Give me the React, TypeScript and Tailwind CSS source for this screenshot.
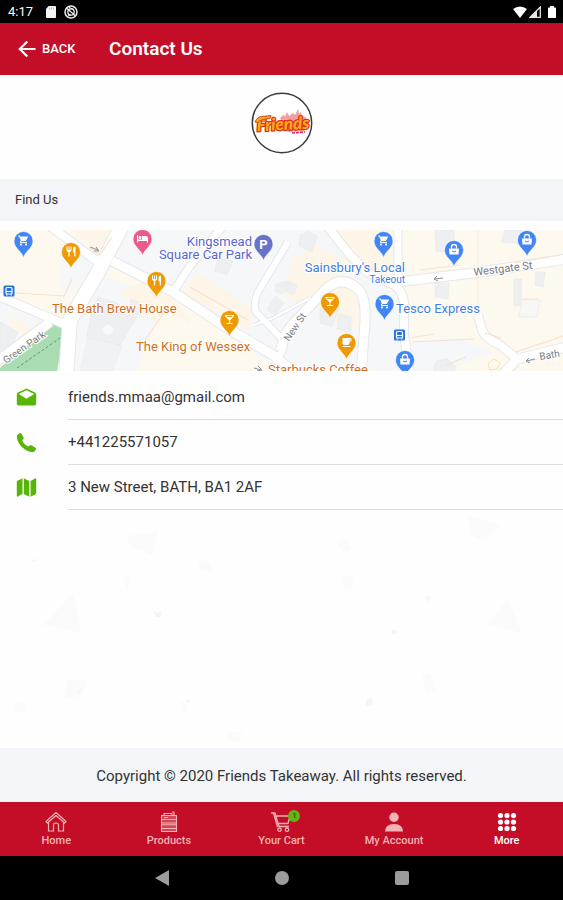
import type { ReactNode } from "react";
import { MdHotel, MdLocalBar, MdLocalCafe, MdRestaurant, MdShoppingCart } from "react-icons/md";
import type { IconType } from "react-icons";

const MailIcon = () => (
  <svg className="h-[21px] w-[21px]" viewBox="0 0 21 21">
    <path d="M.800 7.500Q.800 6.200 2 5.500L10.500 1.500 19 5.500q1.200.7 1.200 2v9.200q0 1.800-1.800 1.800H2.600Q.8 18.500.8 16.700z" fill="currentColor" />
    <path d="M2.800 7l7.700-3.700L18.200 7l-7.700 4.800z" fill="white" />
  </svg>
);

const PhoneIcon = () => (
  <svg className="h-[21px] w-[21px]" viewBox="0 0 21 21" fill="currentColor">
    <path d="M1 3.500Q2.500.800 4.500 1q1 .2 3 4.200.6 1.300-.3 2.200L6.300 8.500q1.200 3.600 5.800 6l1.500-1q1-.8 2.100-.1 4 2.100 4.300 3.100.2 1.300-1.600 2.900-1.300 1-3.600.7Q9.500 19 5.200 14.300.2 8.500 1 3.500z" />
  </svg>
);

const FoldedMapIcon = () => (
  <svg className="h-[21px] w-[21px]" viewBox="0 0 21 21" fill="currentColor">
    <path d="M6.500 1.200v15.600L2 19.500q-1.200.5-1.200-.8V5q0-.8.700-1.200z" />
    <path d="M7.800 1.200l5.500 2.800v15.700l-5.500-2.800z" />
    <path d="M14.600 4L19 1.400q1.200-.5 1.200.8V16q0 .8-.7 1.200l-4.900 2.600z" />
  </svg>
);

const contacts = [
  { icon: <MailIcon />, text: "friends.mmaa@gmail.com", href: "mailto:friends.mmaa@gmail.com" },
  { icon: <PhoneIcon />, text: "+441225571057", href: "tel:+441225571057" },
  { icon: <FoldedMapIcon />, text: "3 New Street, BATH, BA1 2AF", href: "#map" },
];

const StatusBar = () => (
  <div className="flex h-[23px] items-center justify-between bg-black pl-2 pr-1.5 text-white">
    <div className="flex items-center">
      <span className="w-9 text-[13px] leading-5">4:17</span>
      <svg className="h-3 w-4" viewBox="0 0 16 12">
        <path d="M4.500 0H11a1 1 0 0 1 1 1v10a1 1 0 0 1-1 1H3a1 1 0 0 1-1-1V3z" fill="#f4f4f4" />
        <path d="M5.500 1.500v2M7.500 1.500v2M9.500 1.500v2" stroke="#bbb" />
      </svg>
      <svg className="ml-1 h-3.5 w-3.5" viewBox="0 0 14 14" fill="none" stroke="#eee">
        <circle cx="7" cy="7" r="6" strokeWidth="1.5" />
        <circle cx="7" cy="7" r="3.2" strokeWidth="1.3" />
        <path d="M2.5 3l9 8M5 2.5l5 2M4 11l3-1" strokeWidth="1.3" />
      </svg>
    </div>
    <div className="flex items-center gap-0.5">
      <svg className="h-3 w-3.5" viewBox="0 0 14 12" fill="white">
        <path d="M0 3q7-5 14 0L7 12z" />
      </svg>
      <svg className="h-3 w-3" viewBox="0 0 12 12" fill="none" stroke="#e6e6e6">
        <path d="M11.3 1v10.3H1z" strokeWidth="1.3" />
        <path d="M7.5 5v6H1.5z" fill="#e6e6e6" />
      </svg>
      <svg className="ml-1 h-3.5 w-2.5" viewBox="0 0 10 14" fill="white">
        <path d="M3 1h4v1.5h1.2q.8 0 .8.8v9q0 .7-.8.7H1.8q-.8 0-.8-.7v-9q0-.8.8-.8H3z" />
      </svg>
    </div>
  </div>
);

const Logo = () => (
  <svg className="h-[62px] w-[62px]" viewBox="0 0 62 62" role="img" aria-label="Friends">
    <circle cx="31" cy="31" r="29.7" fill="white" stroke="#3c3c3c" strokeWidth="1.5" />
    <path d="M29 26l3-3 2 1 2-4 2 4 4-3 2 2 3-6 1 5 2-2 1 4 4 1-2 14-16 1z" fill="#e3423a" opacity=".5" />
    <text
      x="32"
      y="38"
      textAnchor="middle"
      transform="rotate(-3 31 32)"
      className="font-['Lato'] text-[17px] font-black italic"
      fill="#fbab18"
      stroke="#e02d20"
      strokeWidth="2.4"
      strokeLinejoin="round"
      paintOrder="stroke"
    >
      Friends
    </text>
    <path d="M4 30q2-5 7-5.500l9-1-1 3-7 1q-4 1-5 3z" fill="#fbab18" stroke="#e02d20" strokeWidth=".9" />
    <path d="M41 41l13-1" stroke="#dc2860" strokeWidth="1.600" strokeDasharray="3 1" />
  </svg>
);

type PinProps = { x: number; y: number; color: string; icon?: IconType; children?: ReactNode };

// x, y is the centre of the round head
const Pin = ({ x, y, color, icon: Icon, children }: PinProps) => (
  <g transform={`translate(${x} ${y})`}>
    <path d="M0 17C-.8 11-9.500 7.500-9.500 0a9.500 9.500 0 0 1 19 0C9.500 7.500.8 11 0 17z" fill={color} stroke="white" strokeWidth=".6" />
    {Icon && <Icon x={-6} y={-6.500} size={12} color="white" />}
    {children}
  </g>
);

const ShopPin = ({ x, y }: { x: number; y: number }) => (
  <Pin x={x} y={y} color="#4285f4">
    <path d="M-5-1.500H5L4.500 4.500h-9z" fill="white" />
    <path d="M-2.500-1.500v-1.500a2.500 2.500 0 0 1 5 0v1.500" fill="none" stroke="white" strokeWidth="1.300" />
    <path d="M-2 1q2 2 4 0" fill="none" stroke="#4285f4" />
  </Pin>
);

const Stop = ({ x, y }: { x: number; y: number }) => (
  <g transform={`translate(${x} ${y})`}>
    <rect x="-5.500" y="-5.500" width="11" height="11" rx="1.500" fill="#2673e0" />
    <rect x="-3" y="-3.500" width="6" height="6.500" rx="1" fill="none" stroke="white" strokeWidth="1.200" />
    <path d="M-3 .5h6M-3 4h1.500M1.500 4H3" stroke="white" strokeWidth="1.200" />
  </g>
);

const roads = [
  { d: "M122-4L98 42 70 90 66 145", w: 14 },
  { d: "M50-4L98 32", w: 8 },
  { d: "M112 31L173 62 227 98 273 125 296 144", w: 9 },
  { d: "M173 62L190 36 223-4", w: 7 },
  { d: "M-4 65L50 88 66 95", w: 8 },
  { d: "M-4 132L50 92", w: 9 },
  { d: "M288 12L258 62Q253 72 256 82L283 110Q286 118 277 128", w: 6 },
  { d: "M281 120Q283 105 292 95L327 58Q342 45 358 59Q366 66 365 92L361 145", w: 9 },
  { d: "M327-4L350 25 367 42 388 52", w: 8 },
  { d: "M398-4V52", w: 7 },
  { d: "M385 52L406 51 473 43 567 29", w: 9 },
  { d: "M388 52Q404 58 404 75V105L410 145", w: 8 },
  { d: "M478 85L482 100Q485 108 500 115L517 129", w: 8 },
  { d: "M502 145L517 129 567 117", w: 9 },
  { d: "M254 95L273 88 310 68", w: 2 },
];

const MapView = () => (
  <svg
    id="map"
    className="block h-[141px] w-full font-['Roboto','Liberation_Sans',sans-serif]"
    viewBox="0 0 563 141"
    preserveAspectRatio="xMidYMid slice"
    role="img"
    aria-label="Map of New Street, Bath"
  >
    <rect width="563" height="141" fill="#fef9ef" />
    <g fill="#f6f7f9">
      <path d="M124 0h200l40 42 24 12 18 20 4 67H277L174 66 117 33z" />
      <path d="M98 45L170 68 135 141H72L75 95z" />
      <path d="M0 68L50 88 50 92 0 130z" />
      <path d="M62 8L95 28 88 44 68 68 60 50z" />
      <path d="M404 112l50-5 40 15-50 19h-36z" />
    </g>
    <g fill="#fdf5e8">
      <path d="M118 62l24-10 32 18 16 20-24 51h-22l18-42z" />
      <path d="M181 62l16-20 58 38-5 20z" />
      <path d="M292 30l22-16 40 22-48 42-22-12z" />
      <path d="M317 76l10-18 20-3 12 12v32l-30-8z" />
      <path d="M322 0h72v46l-24-8z" />
      <path d="M160 79L285 141H140z" fill="#fef9ef" />
      <path d="M72 0h44l-18 22z" />
      <path d="M10 86l14 6 10 16-26-8z" />
    </g>
    <g fill="#eeeff1" stroke="#e5e7ea" strokeWidth=".6">
      <path d="M98 67l19 6 10 8 8 8-15 26-33-8 3-18z" />
      <path d="M131 69l12 5-8 15-6-4z" />
      <path d="M88 108l34 8-10 25H80z" opacity=".6" />
      <path d="M300 5l8-4 9 5-5 16-13-6z" />
      <path d="M275 55l10-4 6 4-9 9-7-3zM287 51l10 4-3 9-8-2z" />
      <path d="M275 66l9 7-9 12-8-5z" />
      <path d="M320 78l10-4 9 5-7 17-12-3zM339 84l12 3v16l-14-4z" />
      <path d="M218 28l15 3-6 14-12-4z" />
      <path d="M505 0h17l-3 13-17-1zM435 0h19v20l-18 2zM514 49h8l-1 26-7 1zM536 42h9l-2 15-8-2zM435 53h14l-1 16-13-2z" />
      <path d="M436 131l12-2 8 8-4 8h-20zM0 92l18 10-9 18-9 4z" />
    </g>
    <path d="M522 70h18l-3 17h-18z" fill="#f7f7f8" stroke="#e8e8e8" strokeWidth=".6" />
    <circle cx="108" cy="100" r="5" fill="#f9f9f9" />
    <path d="M50 94l15 2-8 45H0v-3z" fill="#a9dcb3" />
    <path d="M17 138l43-30" stroke="#5c9b6d" strokeWidth="1" strokeDasharray="3 2" />
    <g fill="none" stroke="#e6e7ea" strokeLinejoin="round">
      {roads.map(({ d, w }) => (
        <path key={d} d={d} strokeWidth={w + 2} />
      ))}
    </g>
    <g fill="none" stroke="white" strokeLinejoin="round">
      {roads.map(({ d, w }) => (
        <path key={d} d={d} strokeWidth={w} />
      ))}
    </g>
    <g fill="none" stroke="#f8e0ce">
      <path d="M16 63l48 3 8-17M90 18l10 7 12-18M140 117l28-40M190 57l58 33M420 40l40-5M515 33l45-8M522 69h16M410 108l24-4M412 112l62-3M485 103l16 5M516 122l47-16M446 135l20-8" strokeWidth="1.200" />
      <path d="M478 0v82" strokeWidth=".6" />
      <path d="M488 134l6-5 6 4-3 6-7 1z" stroke="#f7e3a8" fill="#fffaf0" />
    </g>

    <Pin x={23.500} y={11} color="#4285f4" icon={MdShoppingCart} />
    <Pin x={71} y={22} color="#ee9a05" icon={MdRestaurant} />
    <Pin x={142.500} y={9} color="#ea5a8d" icon={MdHotel} />
    <Pin x={156.500} y={51} color="#ee9a05" icon={MdRestaurant} />
    <Pin x={229.500} y={90} color="#ee9a05" icon={MdLocalBar} />
    <Pin x={263.500} y={14} color="#6673c9">
      <text y="5" textAnchor="middle" fill="white" className="text-[13px] font-bold">
        P
      </text>
    </Pin>
    <Pin x={330} y={72} color="#ee9a05" icon={MdLocalBar} />
    <Pin x={346.500} y={113} color="#ee9a05" icon={MdLocalCafe} />
    <Pin x={383.500} y={11} color="#4285f4" icon={MdShoppingCart} />
    <ShopPin x={454} y={20} />
    <ShopPin x={527} y={10} />
    <Pin x={384.500} y={74} color="#4285f4" icon={MdShoppingCart} />
    <ShopPin x={405} y={130} />
    <Stop x={9} y={61} />
    <Stop x={399.500} y={105} />

    <g className="text-[13px]" stroke="white" strokeWidth="2" strokeLinejoin="round" paintOrder="stroke">
      <g fill="#5b67cf">
        <text x="252" y="16" textAnchor="end">Kingsmead</text>
        <text x="252" y="29" textAnchor="end">Square Car Park</text>
      </g>
      <g fill="#3f7fe0">
        <text x="405" y="42" textAnchor="end">Sainsbury's Local</text>
        <text x="405" y="53" textAnchor="end" className="text-[10px]">Takeout</text>
        <text x="396" y="83">Tesco Express</text>
      </g>
      <g fill="#cf7025">
        <text x="52" y="83">The Bath Brew House</text>
        <text x="136" y="121">The King of Wessex</text>
        <text x="268" y="144">Starbucks Coffee</text>
      </g>
    </g>
    <g fill="#777b80" className="text-[10px]" stroke="white" strokeWidth="2" paintOrder="stroke">
      <text transform="translate(6 134) rotate(-35)">Green Park</text>
      <text transform="translate(289 112) rotate(-56)">New St</text>
      <text transform="translate(474 46) rotate(-7)" className="text-[11px]">Westgate St</text>
      <text transform="translate(540 130) rotate(-10)">Bath</text>
    </g>
    <g fill="none" stroke="#8b8f94">
      <path d="M443 48l-9 1M437 46l-3 3 4 2M535 129l-9 2M529 128l-3 3 4 2M90 17l8 3M96 17l3 4-5 0M254 138l7 2M258 136l4 4-5 1" />
    </g>
  </svg>
);

// faint crumbs scattered over the page background
const Crumbs = () => (
  <svg className="pointer-events-none absolute inset-0 -z-10 h-full w-full" viewBox="0 0 563 238" preserveAspectRatio="xMidYMid slice" aria-hidden="true">
    <g fill="#fbfbfb">
      <path d="M74 83l7 40-38-8zM126 26l32-4-6 23-20-8zM468 5l32 10-16 16-14-6zM508 88l14 36-34-10z" />
      <path d="M340 68l12-3 2 10-8 6zM200 50l10 2 2 10-14-4zM68 170l20 1-10 20-14-4zM422 165l8-2 6 18-10 2z" />
      <path d="M14 192l12 2 2 6-14 4zM124 66l8 2-6 14zM336 32l8-4 8 10-8 6zM180 190l8 6-4 12zM230 222h12l-2 10-14-2z" />
    </g>
    <g fill="#f5f5f5">
      <path d="M153 100l4 3 5-2-2 6h-4zM366 190l6-3v8l-6 1zM392 120h4v4h-5zM425 88l5-4-1 8zM32 50l6-1-4 3zM186 190l5-1-3 4zM78 181l4-1-3 4z" />
    </g>
  </svg>
);

const BackArrow = () => (
  <svg className="h-[22px] w-[22px]" viewBox="0 0 22 22" fill="none" stroke="currentColor" strokeWidth="2.200">
    <path d="M19.500 11H4M11.300 3.500L3.800 11l7.500 7.500" />
  </svg>
);

const HomeIcon = () => (
  <svg className="h-[22px] w-[22px]" viewBox="0 0 22 22" fill="none" stroke="currentColor" strokeWidth="1.200" strokeLinejoin="round">
    <path d="M1 10.500L11 1.500l10 9-1.400 1.500L11 4.500 2.400 12z" />
    <path d="M3.500 11.500V20h5v-6q0-2 2.500-2t2.500 2v6h5v-8.500" />
  </svg>
);

const ProductsIcon = () => (
  <svg className="h-[22px] w-[22px]" viewBox="0 0 22 22" fill="none" stroke="currentColor" strokeWidth="1.100">
    <path d="M3.500 4.500h15v16h-15z" fill="currentColor" fillOpacity=".35" />
    <path d="M6 4.500V2.500h8v2M14 1h2v3.500M4 8.500h14M4 12h14M4 13.700h14M4 17.500h14M6 6.500h4" />
  </svg>
);

const CartIcon = () => (
  <svg className="h-[22px] w-[22px]" viewBox="0 0 22 22" fill="none" stroke="currentColor" strokeWidth="1.300" strokeLinejoin="round">
    <path d="M1 2h4l4 13.500h10M5.800 5H20l-2 7.500H8M3.500 2l4 14" />
    <circle cx="9.500" cy="18.700" r="1.700" />
    <circle cx="17" cy="18.700" r="1.700" />
  </svg>
);

const AccountIcon = () => (
  <svg className="h-[22px] w-[22px]" viewBox="0 0 22 22" fill="currentColor">
    <circle cx="11" cy="6.200" r="4.700" />
    <path d="M2 20.500q0-7.500 9-7.500t9 7.500z" />
  </svg>
);

const MoreIcon = () => (
  <svg className="h-[22px] w-[22px]" viewBox="0 0 22 22" fill="currentColor">
    {[4.500, 11, 17.500].map((y) => [4.500, 11, 17.500].map((x) => <circle key={`${x}-${y}`} cx={x} cy={y} r="2.600" />))}
  </svg>
);

const tabs = [
  { label: "Home", icon: <HomeIcon /> },
  { label: "Products", icon: <ProductsIcon /> },
  { label: "Your Cart", icon: <CartIcon />, badge: 1 },
  { label: "My Account", icon: <AccountIcon /> },
  { label: "More", icon: <MoreIcon />, active: true },
];

const TabBar = () => (
  <nav className="grid h-[54px] grid-cols-5 bg-[#c40d26]">
    {tabs.map(({ label, icon, badge, active }) => (
      <a
        key={label}
        href="#"
        aria-current={active ? "page" : undefined}
        className={`flex flex-col items-center pt-[9px] text-[11px] leading-4 font-medium ${active ? "text-white" : "text-[#f3b3b5]"}`}
      >
        <span className="relative">
          {icon}
          {badge && (
            <span className="absolute -right-2 -top-px h-3 w-3 rounded-full bg-[#62b510] text-center text-[8px] leading-3 text-[#234a00]">
              {badge}
            </span>
          )}
        </span>
        {label}
      </a>
    ))}
  </nav>
);

const SystemNav = () => (
  <div className="flex h-11 items-center justify-center gap-[106px] bg-black">
    <button type="button" aria-label="Back">
      <svg className="h-4 w-3.5" viewBox="0 0 14 16" fill="#9c9c9c">
        <path d="M14 0v16L0 8z" />
      </svg>
    </button>
    <button type="button" aria-label="Home" className="h-3.5 w-3.5 rounded-full bg-[#9c9c9c]" />
    <button type="button" aria-label="Recent apps" className="h-3.5 w-3.5 rounded-xs bg-[#9c9c9c]" />
  </div>
);

const App = () => {
  return (
    <div className="flex min-h-screen flex-col bg-[#fefefe] font-['Roboto','Liberation_Sans',sans-serif] text-[#333]">
      <StatusBar />
      <header className="flex h-[52px] items-center bg-[#c40d26] pl-4 text-white shadow-xs">
        <button type="button" className="flex w-[93px] items-center gap-1 text-[13px] font-medium">
          <BackArrow />
          BACK
        </button>
        <h1 className="text-[19px] leading-6 font-semibold">Contact Us</h1>
      </header>

      <main className="flex flex-1 flex-col">
        <div className="flex h-[104px] justify-center pt-[17px]">
          <Logo />
        </div>
        <h2 className="mb-[9px] h-[42px] bg-[#f4f5f8] px-[15px] text-[13px] leading-[42px]">Find Us</h2>
        <MapView />
        <ul className="pt-1">
          {contacts.map(({ icon, text, href }) => (
            <li key={text}>
              <a href={href} className="flex h-[45px] items-center pl-4">
                <span className="w-[52px] text-[#57b605]">{icon}</span>
                <span className="flex h-full flex-1 items-center border-b border-[#dedede] text-[15px]">{text}</span>
              </a>
            </li>
          ))}
        </ul>
        <div className="relative isolate flex-1">
          <Crumbs />
        </div>
      </main>

      <footer>
        <p className="h-[54px] bg-[#f4f5f8] text-center text-[15px] leading-[56px]">
          Copyright © 2020 Friends Takeaway. All rights reserved.
        </p>
        <TabBar />
        <SystemNav />
      </footer>
    </div>
  );
};

export default App;
